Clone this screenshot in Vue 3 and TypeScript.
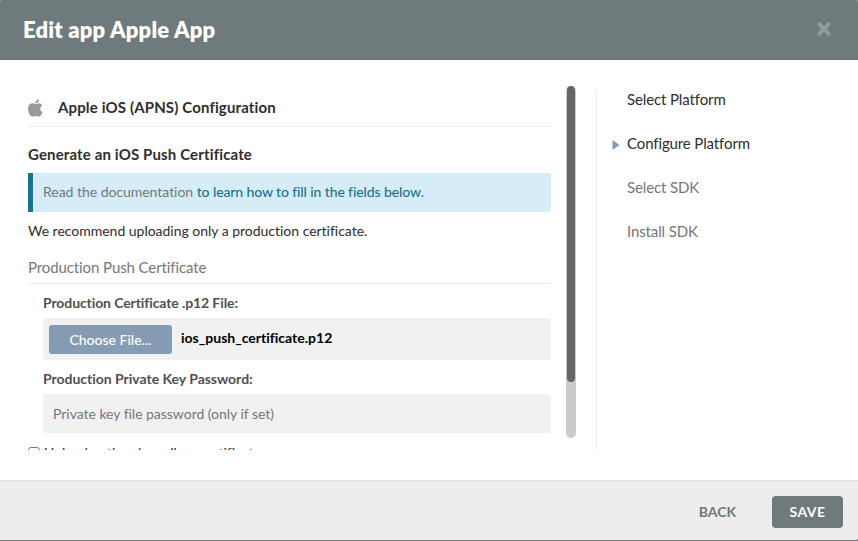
<script setup lang="ts">
import { ref } from 'vue'

interface Step {
  label: string
  state: 'done' | 'current' | 'pending'
}

const steps: Step[] = [
  { label: 'Select Platform', state: 'done' },
  { label: 'Configure Platform', state: 'current' },
  { label: 'Select SDK', state: 'pending' },
  { label: 'Install SDK', state: 'pending' },
]

const fileName = ref('ios_push_certificate.p12')
const password = ref('')
const sandbox = ref(false)
</script>

<template>
  <div class="dialog">
    <header class="header">
      <h1 class="title">Edit app Apple App</h1>
      <button class="close" aria-label="Close">
        <svg width="16" height="16" viewBox="0 0 16 16">
          <path d="M3.2 3.2 12.8 12.8M12.8 3.2 3.2 12.8" />
        </svg>
      </button>
    </header>

    <main class="body">
      <section class="form">
        <h2 class="platform">
          <svg class="apple" width="15" height="18" viewBox="0 0 15 18">
            <path d="M7.5 5.1C6.5 5 5.5 4.2 4.2 4.3 1.7 4.5 0 6.5 0 9.8 0 13.6 2.4 17.8 4.7 17.8c1 0 1.6-.7 2.9-.7s1.8.7 2.9.7c1.900 0 3.400-2.600 4.200-4.700-3.100-1.300-3.100-5.200-.3-6.800-.9-1.300-2.200-2-3.500-2-1.400 0-2.300.8-3.400.8z" />
            <path d="M7.300 4.300C7 2.100 9 .2 11 0c.3 2.200-1.500 4.200-3.700 4.300z" />
          </svg>
          <span>Apple iOS (APNS) Configuration</span>
        </h2>

        <h3 class="subtitle">Generate an iOS Push Certificate</h3>
        <p class="note">Read the documentation <a class="link">to learn how to fill in the fields below.</a></p>
        <p class="hint">We recommend uploading only a production certificate.</p>

        <h4 class="group">Production Push Certificate</h4>
        <div class="fields">
          <label class="label file-label">Production Certificate .p12 File:</label>
          <div class="file">
            <button class="choose">Choose File...</button>
            <span class="file-name">{{ fileName }}</span>
          </div>
          <label class="label key-label" for="key">Production Private Key Password:</label>
          <input id="key" v-model="password" class="input" type="text" placeholder="Private key file password (only if set)" />
        </div>

        <label class="check">
          <input v-model="sandbox" class="box" type="checkbox" />
          <span>Upload optional sandbox certificate</span>
        </label>
      </section>

      <div class="track"><div class="thumb"></div></div>

      <nav class="steps">
        <div v-for="step in steps" :key="step.label" class="step" :class="step.state">
          <svg class="marker" width="8" height="10" viewBox="0 0 8 10"><path d="M0.500 0 7.500 5 0.500 10z" /></svg>
          <span>{{ step.label }}</span>
        </div>
      </nav>
    </main>

    <footer class="footer">
      <button class="back">BACK</button>
      <button class="save">SAVE</button>
    </footer>
  </div>
</template>

<style>
body {
  background: #777;
}
</style>

<style scoped>
* {
  box-sizing: border-box;
  margin: 0;
}
.dialog {
  display: flex;
  flex-direction: column;
  height: 540px;
  overflow: hidden;
  background: #fff;
  border-radius: 2px 3px 3px 0;
  font: 14px/20px Lato, "Liberation Sans", sans-serif;
  font-variant-ligatures: none;
  color: #2e2e2e;
}
button {
  border: 0;
  padding: 0;
  font: inherit;
  background: none;
}
.header {
  display: flex;
  flex: none;
  align-items: center;
  justify-content: space-between;
  height: 60px;
  padding: 0 26px 0 23px;
  background: #6e7a7b;
}
.title {
  color: #fff;
  font-size: 22px;
  line-height: 28px;
  font-weight: 800;
  letter-spacing: 0.18px;
}
.close {
  display: flex;
  padding-bottom: 2px;
}
.close path {
  fill: none;
  stroke: #919b9c;
  stroke-width: 4;
  stroke-linecap: round;
}
.body {
  display: flex;
  height: 390px;
  padding: 26px 0 0 28px;
}
.form {
  width: 523px;
  overflow: hidden;
}
.platform {
  display: flex;
  gap: 15px;
  height: 41px;
  padding-top: 11px;
  border-bottom: 1px solid #eee;
  font-size: 15px;
  line-height: 20px;
  font-weight: 700;
  letter-spacing: 0.14px;
}
.apple {
  margin-top: 2px;
  fill: #999;
}
.subtitle {
  height: 46px;
  padding-top: 17px;
  font-size: 15px;
  line-height: 20px;
  font-weight: 700;
  letter-spacing: 0.14px;
}
.note {
  height: 39px;
  padding: 9px 10px;
  border-left: 5px solid #197395;
  background: #d6edf7;
  color: #6e7a7b;
  letter-spacing: -0.03px;
}
.link {
  color: #197395;
  font-weight: 500;
  letter-spacing: -0.11px;
}
.hint {
  height: 45px;
  padding-top: 9px;
  letter-spacing: -0.02px;
}
.group {
  height: 27px;
  border-bottom: 1px solid #eee;
  color: #777;
  font-size: 15px;
  line-height: 20px;
  font-weight: 400;
  letter-spacing: -0.1px;
}
.fields {
  padding: 0 0 0 15px;
}
.label {
  display: block;
  color: #505050;
  font-weight: 700;
}
.file-label {
  height: 34px;
  padding-top: 9px;
  letter-spacing: -0.1px;
}
.file {
  display: flex;
  align-items: center;
  gap: 9px;
  height: 42px;
  padding: 1px 6px 0;
  border-radius: 3px;
  background: #f1f1f1;
}
.choose {
  width: 123px;
  height: 29px;
  border-radius: 3px;
  background: #869cb5;
  color: #fff;
  font-weight: 500;
}
.file-name {
  padding-bottom: 3px;
  color: #000;
  font-weight: 700;
}
.key-label {
  height: 34px;
  padding-top: 9px;
  letter-spacing: -0.02px;
}
.input {
  display: block;
  width: 100%;
  height: 39px;
  padding: 0 10px 1px;
  border: 0;
  border-radius: 3px;
  background: #f1f1f1;
  font: inherit;
  letter-spacing: -0.03px;
}
.input::placeholder {
  color: #777;
}
.check {
  display: flex;
  gap: 4px;
  padding-top: 10px;
  letter-spacing: -0.02px;
}
.box {
  flex: none;
  width: 12px;
  height: 12px;
  margin-top: 4px;
  border: 1px solid #767676;
  border-radius: 3px;
  appearance: none;
}
.track {
  width: 10px;
  height: 352px;
  margin-left: 15px;
  padding: 0 1px;
  border-radius: 5px;
  background: #cbcbcb;
}
.thumb {
  height: 296px;
  border-radius: 4px;
  background: #666;
}
.steps {
  display: flex;
  flex-direction: column;
  gap: 24px;
  height: 360px;
  margin: 4px 0 0 20px;
  padding: 0 0 0 15px;
  border-left: 1px solid #eee;
}
.step {
  display: flex;
  align-items: center;
  gap: 7px;
  height: 20px;
  padding-bottom: 2px;
  color: #777;
  font-size: 15px;
  letter-spacing: -0.12px;
}
.done,
.current {
  color: #2e2e2e;
}
.marker {
  visibility: hidden;
  margin-top: 4px;
  fill: #869cb5;
}
.current .marker {
  visibility: visible;
}
.footer {
  display: flex;
  flex: none;
  align-items: center;
  justify-content: flex-end;
  gap: 36px;
  height: 60px;
  margin-top: auto;
  padding: 3px 15px 0 0;
  border-top: 1px solid #e1e1e1;
  background: #ededed;
  font-weight: 700;
}
.back {
  color: #6e7a7b;
}
.save {
  width: 71px;
  height: 32px;
  border-radius: 4px;
  background: #6e7a7b;
  color: #fff;
  letter-spacing: 0.4px;
}
</style>
